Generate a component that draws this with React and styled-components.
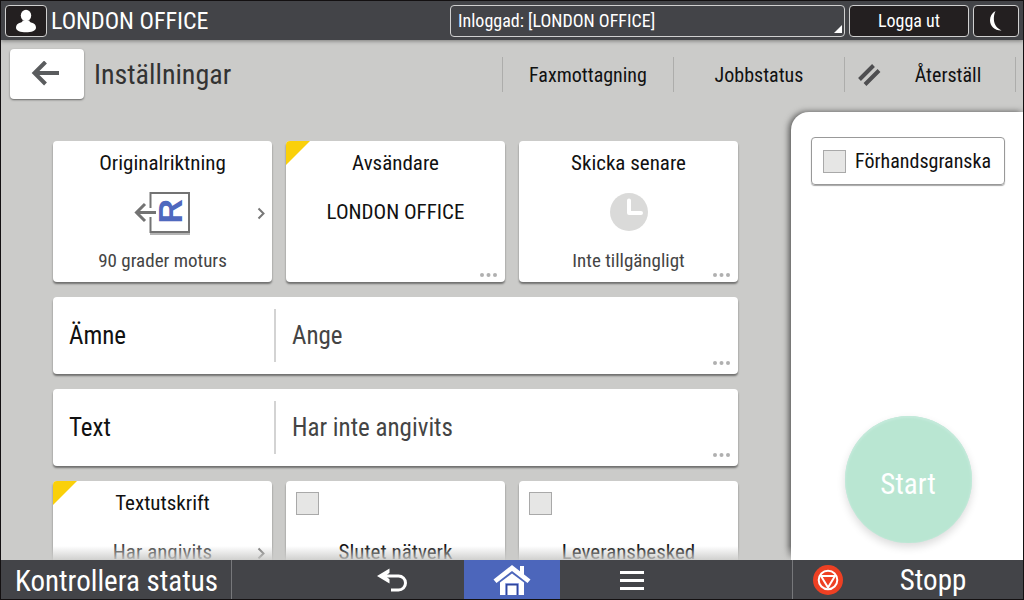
import React from "react";
import styled, { createGlobalStyle, css } from "styled-components";

const GlobalStyle = createGlobalStyle`
  *, *::before, *::after { box-sizing: border-box; }
  body { margin: 0; background: #cbcbc9; }
  body, button, input, select {
    font-family: "Roboto Condensed", Roboto, sans-serif;
  }
  button, select { margin: 0; padding: 0; border: 0; background: none; color: inherit; cursor: pointer; }
  svg { display: block; }
`;

const Screen = styled.div`
  display: flex;
  flex-direction: column;
  height: 100vh;
  overflow: hidden;
  border: 1px solid #131011;
  background: #cbcbc9;
  color: #111;
`;

/* Top bar */
const TopBar = styled.header`
  position: relative;
  z-index: 2;
  display: flex;
  align-items: center;
  gap: 4px;
  flex: none;
  height: 39px;
  padding: 0 4px;
  background: #434448;
  color: #fff;
  box-shadow: 0 1px 4px rgba(0, 0, 0, 0.4);
`;

const frame = css`
  height: 32px;
  border: 1px solid #d0d0d0;
  border-radius: 4px;
`;

const TopButton = styled.button`
  ${frame}
  display: flex;
  align-items: center;
  justify-content: center;
  flex: none;
  width: ${(p) => p.$width};
  background: #231f20;
  font-size: 18px;
`;

const Machine = styled.div`
  flex: 1;
  font-size: 24px;
  line-height: 32px;
  white-space: nowrap;
`;

const AccountField = styled.label`
  position: relative;
  flex: 0 1 395px;
  &::after {
    content: "";
    position: absolute;
    right: 3px;
    bottom: 4px;
    border-left: 8px solid transparent;
    border-bottom: 8px solid #fff;
    pointer-events: none;
  }
`;

const AccountSelect = styled.select`
  ${frame}
  display: block;
  appearance: none;
  width: 100%;
  padding: 0 20px 0 7px;
  color: #fff;
  font-size: 18px;
  option { color: #111; }
`;

/* Page header */
const PageHeader = styled.div`
  display: flex;
  align-items: center;
  flex: none;
  padding: 9px 7px 13px 9px;
`;

const BackButton = styled.button`
  display: flex;
  align-items: center;
  justify-content: center;
  width: 74px;
  height: 50px;
  padding-right: 4px;
  border-radius: 4px;
  background: #fff;
  box-shadow: 0 1px 2px rgba(0, 0, 0, 0.5);
`;

const PageTitle = styled.h1`
  flex: 1;
  margin: 0 0 0 10px;
  padding-top: 2px;
  color: #333;
  font-size: 28px;
  font-weight: 400;
  line-height: 48px;
`;

const Nav = styled.nav`
  display: flex;
  border-right: 1px solid #adadab;
`;

const NavButton = styled.button`
  display: flex;
  align-items: center;
  width: 171px;
  height: 35px;
  border-left: 1px solid #adadab;
  padding-left: ${(p) => (p.$icon ? "13px" : "0")};
  padding-top: 1px;
  font-size: 20px;
  span { flex: 1; text-align: center; }
`;

/* Work area */
const Work = styled.div`
  display: flex;
  flex: 1;
  min-height: 0;
`;

const Settings = styled.main`
  position: relative;
  flex: 1;
  min-width: 0;
  overflow: hidden;
  padding: 29px 53px 0 52px;
  &::after {
    content: "";
    position: absolute;
    left: 0;
    right: 0;
    bottom: 0;
    height: 14px;
    background: linear-gradient(rgba(203, 203, 201, 0), rgba(203, 203, 201, 0.9));
    pointer-events: none;
  }
`;

const Grid = styled.div`
  display: grid;
  grid-template-columns: repeat(3, 1fr);
  gap: 15px 14px;
`;

const surface = css`
  position: relative;
  border-radius: 4px;
  background: #fff;
  box-shadow: 0 2px 2px rgba(0, 0, 0, 0.45);
  overflow: hidden;
`;

const Flag = styled.span`
  position: absolute;
  left: 0;
  top: 0;
  border-top: 24px solid #fad00a;
  border-right: 24px solid transparent;
`;

const Card = styled.button`
  ${surface}
  display: grid;
  grid-template-rows: 24px 1fr 24px;
  justify-items: center;
  align-items: center;
  height: 141px;
  padding: 10px 10px 9px;
  font-size: 21px;
  line-height: 24px;
`;

const CheckCard = styled(Card).attrs({ as: "label" })`
  cursor: pointer;
`;

const CardValue = styled.span`
  color: ${(p) => (p.$muted ? "#444" : "#111")};
`;

const CardNote = styled.span`
  color: #444;
  font-size: 19px;
`;

const ChevronMark = styled.svg`
  position: absolute;
  right: 6px;
  top: 66px;
`;

const DotsMark = styled.svg`
  position: absolute;
  right: 8px;
  bottom: ${(p) => (p.$raised ? "9px" : "5px")};
`;

const CheckBox = styled.input`
  appearance: none;
  flex: none;
  width: 23px;
  height: 23px;
  margin: 0;
  border: 1px solid #a9a9a9;
  background: #e6e6e5;
  &:checked { background: #4c66bb; }
`;

const CardCheckBox = styled(CheckBox)`
  justify-self: start;
`;

const FieldCard = styled.button`
  ${surface}
  grid-column: 1 / -1;
  display: flex;
  align-items: center;
  height: 77px;
  padding: 0 16px;
  font-size: 25px;
  text-align: left;
`;

const FieldName = styled.span`
  width: 207px;
  border-right: 2px solid #d3d3d3;
  line-height: 53px;
`;

const FieldValue = styled.span`
  padding-left: 16px;
  color: #444;
`;

/* Start panel */
const StartPanel = styled.aside`
  display: flex;
  flex-direction: column;
  align-items: center;
  justify-content: space-between;
  flex: none;
  width: 232px;
  padding: 25px 18px 17px 20px;
  border-top-left-radius: 18px;
  background: #fff;
  box-shadow: -2px 0 6px rgba(0, 0, 0, 0.6);
`;

const PreviewToggle = styled.label`
  display: flex;
  align-items: center;
  gap: 9px;
  width: 100%;
  height: 48px;
  padding: 0 11px;
  border: 1px solid #999;
  border-radius: 4px;
  font-size: 20px;
  box-shadow: 0 1px 1px rgba(0, 0, 0, 0.35);
  cursor: pointer;
`;

const StartButton = styled.button`
  width: 127px;
  height: 127px;
  padding-top: 8px;
  border-radius: 50%;
  background: #b9e6d2;
  color: #fff;
  font-size: 29px;
  box-shadow: inset 0 1px 2px 1px #c4eadb, 0 4px 8px rgba(0, 0, 0, 0.14);
`;

/* Bottom bar */
const BottomBar = styled.footer`
  position: relative;
  z-index: 2;
  display: flex;
  flex: none;
  height: 39px;
  background: #434448;
  color: #fff;
`;

const StatusButton = styled.button`
  width: 231px;
  border-right: 1px solid #77787b;
  padding-left: 14px;
  text-align: left;
  font-size: 29px;
  line-height: 39px;
  white-space: nowrap;
  padding-top: 2px;
`;

const SystemKeys = styled.div`
  display: flex;
  justify-content: center;
  flex: 1;
`;

const SystemKey = styled.button`
  display: flex;
  align-items: center;
  justify-content: center;
  width: ${(p) => (p.$home ? "96px" : "144px")};
  background: ${(p) => (p.$home ? "#4c66bb" : "none")};
`;

const StopButton = styled.button`
  display: flex;
  align-items: center;
  width: 231px;
  border-left: 1px solid #77787b;
  padding-left: 20px;
  font-size: 29px;
  line-height: 37px;
  span { flex: 1; padding-top: 2px; text-align: center; }
`;

const UserIcon = () => (
  <svg width="22" height="24" viewBox="0 0 22 24" fill="#fff" aria-hidden="true">
    <ellipse cx="11" cy="6.500" rx="5.200" ry="5.800" />
    <path d="M7.600 11.500h6.800c.2 1.500 1 1.800 2.600 2.300 2.600.8 4 2.400 4 4.900 0 3.200-4.600 4.500-10 4.500S1 21.900 1 18.700c0-2.500 1.400-4.100 4-4.900 1.600-.5 2.400-.8 2.600-2.300z" />
  </svg>
);

const MoonIcon = () => (
  <svg width="14" height="22" viewBox="0 0 14 22" aria-hidden="true">
    <path d="M6.500 1C2.800 3 1 6.500 1 10.300c0 5.700 4.600 10.400 11.500 10.200C8 18.500 5.200 14.600 4.900 9.800 4.700 6.500 5.200 3.800 6.500 1z" fill="#fff" />
  </svg>
);

const BackIcon = () => (
  <svg width="28" height="26" viewBox="0 0 28 26" fill="none" stroke="#5a5c5e" strokeWidth="4" aria-hidden="true">
    <path d="M28 12H3.500M14.500 1L3.500 12l11 11" />
  </svg>
);

const ResetIcon = () => (
  <svg width="23" height="22" viewBox="0 0 23 22" stroke="#4e4e50" strokeWidth="4" aria-hidden="true">
    <path d="M1.500 15.500L15.500 1.500M7 20.500L21 6.500" />
  </svg>
);

const OrientationIcon = () => (
  <svg width="58" height="46" viewBox="0 0 58 46" aria-hidden="true">
    <path d="M16 45h40" stroke="#b4b4b4" strokeWidth="2" />
    <path d="M16.500 19V4H55v39H16.500V28" fill="none" stroke="#737373" strokeWidth="2" />
    <path d="M22 23.500H2.500M11 15l-8.500 8.500 8.500 8.500" fill="none" stroke="#737373" strokeWidth="3" />
    <text
      transform="translate(48 34.500) rotate(-90)"
      fontFamily="Liberation Sans, sans-serif"
      fontWeight="700"
      fontSize="34"
      fill="#4f69be"
    >
      R
    </text>
  </svg>
);

const ClockIcon = () => (
  <svg width="38" height="38" viewBox="0 0 38 38" aria-hidden="true">
    <circle cx="19" cy="19" r="19" fill="#dadad9" />
    <path d="M19 7.500V20h12" fill="none" stroke="#fff" strokeWidth="4" strokeLinecap="round" strokeLinejoin="round" />
  </svg>
);

const Chevron = () => (
  <ChevronMark width="9" height="13" viewBox="0 0 9 13" aria-hidden="true">
    <path d="M1.500 1.500l5 5-5 5" fill="none" stroke="#777" strokeWidth="2" />
  </ChevronMark>
);

const Dots = ({ raised }) => (
  <DotsMark $raised={raised} width="17" height="4" viewBox="0 0 17 4" fill="#b0b0b0" aria-hidden="true">
    <circle cx="2" cy="2" r="2" />
    <circle cx="8.500" cy="2" r="2" />
    <circle cx="15" cy="2" r="2" />
  </DotsMark>
);

const ReturnIcon = () => (
  <svg width="32" height="24" viewBox="0 0 32 24" aria-hidden="true">
    <path d="M1 8L13.500 0.500v4.300L9.500 8l4 3.300v4.200z" fill="#fff" />
    <path d="M5 8h17.500a7 7 0 0 1 0 14H15" fill="none" stroke="#fff" strokeWidth="3" />
  </svg>
);

const HomeIcon = () => (
  <svg width="38" height="32" viewBox="0 0 38 32" aria-hidden="true">
    <path d="M27 2h4v11h-4z" fill="#fff" />
    <path d="M19 1L0.500 15.500l3 3.500L19 7l15.500 12 3-3.500z" fill="#fff" />
    <path d="M19 9.500L7 18.500V31h24V18.500z" fill="#fff" />
    <path d="M13.700 31V20.700h10.600V31" fill="none" stroke="#2f469e" strokeWidth="1.500" />
    <path d="M12.500 31V19.500h13V31" fill="none" stroke="#8799dc" strokeWidth="1" />
  </svg>
);

const MenuIcon = () => (
  <svg width="24" height="20" viewBox="0 0 24 20" fill="#fff" aria-hidden="true">
    <path d="M0 1h24v3H0zM0 9h24v3H0zM0 17h24v3H0z" />
  </svg>
);

const StopIcon = () => (
  <svg width="30" height="30" viewBox="0 0 30 30" aria-hidden="true">
    <circle cx="15" cy="15" r="15" fill="#ee4023" />
    <circle cx="15" cy="15" r="9.300" fill="none" stroke="#fff" strokeWidth="2" />
    <path d="M8 11h14l-7 11.500z" fill="none" stroke="#fff" strokeWidth="2" strokeLinejoin="round" />
  </svg>
);

export default function App() {
  return (
    <>
      <GlobalStyle />
      <Screen lang="sv">
        <TopBar>
          <TopButton $width="42px" aria-label="Användare"><UserIcon /></TopButton>
          <Machine>LONDON OFFICE</Machine>
          <AccountField>
            <AccountSelect aria-label="Inloggad användare">
              <option>Inloggad: [LONDON OFFICE]</option>
            </AccountSelect>
          </AccountField>
          <TopButton $width="120px">Logga ut</TopButton>
          <TopButton $width="46px" aria-label="Viloläge"><MoonIcon /></TopButton>
        </TopBar>

        <PageHeader>
          <BackButton aria-label="Tillbaka"><BackIcon /></BackButton>
          <PageTitle>Inställningar</PageTitle>
          <Nav>
            <NavButton><span>Faxmottagning</span></NavButton>
            <NavButton><span>Jobbstatus</span></NavButton>
            <NavButton $icon><ResetIcon /><span>Återställ</span></NavButton>
          </Nav>
        </PageHeader>

        <Work>
          <Settings>
            <Grid>
              <Card>
                <span>Originalriktning</span>
                <OrientationIcon />
                <CardNote>90 grader moturs</CardNote>
                <Chevron />
              </Card>
              <Card>
                <Flag />
                <span>Avsändare</span>
                <CardValue>LONDON OFFICE</CardValue>
                <Dots />
              </Card>
              <Card>
                <span>Skicka senare</span>
                <ClockIcon />
                <CardNote>Inte tillgängligt</CardNote>
                <Dots />
              </Card>
              <FieldCard>
                <FieldName>Ämne</FieldName>
                <FieldValue>Ange</FieldValue>
                <Dots raised />
              </FieldCard>
              <FieldCard>
                <FieldName>Text</FieldName>
                <FieldValue>Har inte angivits</FieldValue>
                <Dots raised />
              </FieldCard>
              <Card>
                <Flag />
                <span>Textutskrift</span>
                <CardValue $muted>Har angivits</CardValue>
                <Chevron />
              </Card>
              <CheckCard>
                <CardCheckBox type="checkbox" />
                <CardValue>Slutet nätverk</CardValue>
              </CheckCard>
              <CheckCard>
                <CardCheckBox type="checkbox" />
                <CardValue>Leveransbesked</CardValue>
              </CheckCard>
            </Grid>
          </Settings>

          <StartPanel>
            <PreviewToggle>
              <CheckBox type="checkbox" />
              Förhandsgranska
            </PreviewToggle>
            <StartButton>Start</StartButton>
          </StartPanel>
        </Work>

        <BottomBar>
          <StatusButton>Kontrollera status</StatusButton>
          <SystemKeys>
            <SystemKey aria-label="Bakåt"><ReturnIcon /></SystemKey>
            <SystemKey $home aria-label="Hem"><HomeIcon /></SystemKey>
            <SystemKey aria-label="Meny"><MenuIcon /></SystemKey>
          </SystemKeys>
          <StopButton><StopIcon /><span>Stopp</span></StopButton>
        </BottomBar>
      </Screen>
    </>
  );
}
